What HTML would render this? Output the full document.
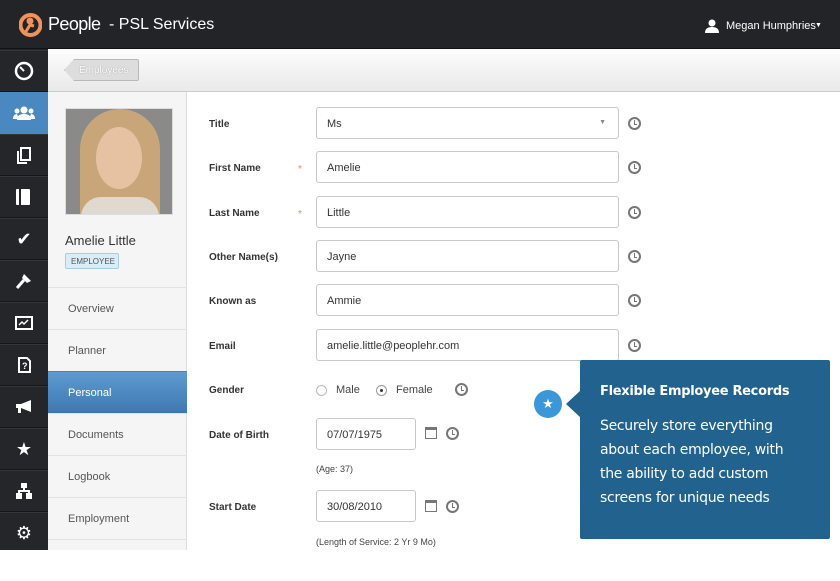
<!DOCTYPE html>
<html><head><style>
*{margin:0;padding:0;box-sizing:border-box}
body{width:840px;height:550px;overflow:hidden;background:#fff;font-family:"Liberation Sans",sans-serif;position:relative}
.top{position:absolute;left:0;top:0;width:840px;height:49px;background:#232427;border-bottom:1px solid #111}
.side{position:absolute;left:0;top:49px;width:48px;height:501px;background:#24262a;overflow:hidden}
.si{position:absolute;left:0;width:48px;height:42px;border-bottom:1px solid #151618;border-top:1px solid #33363a;display:flex;align-items:center;justify-content:center;color:#fff;font-size:18px}
.sub{position:absolute;left:48px;top:49px;width:792px;height:43px;background:linear-gradient(#fdfdfd,#e9e9e9);border-bottom:1px solid #ccc}
.lp{position:absolute;left:48px;top:92px;width:139px;height:458px;background:#f5f5f5;border-right:1px solid #ddd}
.nav{position:absolute;left:0;width:139px;height:42px;border-top:1px solid #e2e2e2;font-size:11px;color:#555;padding:15px 0 0 20px}
.lab{position:absolute;left:209px;font-size:10px;font-weight:bold;color:#333}
.inp{position:absolute;left:316px;width:303px;height:32px;border:1px solid #c8c8c8;border-radius:3px;font-size:11px;color:#333;padding:10px 0 0 10px;background:#fff}
.clk{position:absolute;width:13px;height:13px;border:2px solid #777;border-radius:50%}
.clk:after{content:"";position:absolute;left:3.5px;top:1px;width:2px;height:4px;border-left:1.5px solid #777;border-bottom:1.5px solid #777}
.ast{position:absolute;left:298px;color:#e8825a;font-size:10px}
.cal{position:absolute;width:12px;height:12px;border:1px solid #777;border-top:3px solid #777}
</style></head><body>
<div class="top">
<svg style="position:absolute;left:19px;top:13px" width="23" height="24" viewBox="0 0 23 24"><circle cx="11.5" cy="12" r="10" fill="none" stroke="#f0935a" stroke-width="4"/><circle cx="11" cy="8" r="3.5" fill="#f0935a"/><path d="M6 20 L11 12 L15 13" stroke="#f0935a" stroke-width="3" fill="none"/></svg>
<div style="position:absolute;left:48px;top:14px;color:#fff;font-size:18px;letter-spacing:-0.6px">People</div>
<div style="position:absolute;left:109px;top:16px;color:#fff;font-size:16px">- PSL Services</div>
<svg style="position:absolute;left:705px;top:19px" width="14" height="14" viewBox="0 0 14 14"><circle cx="7" cy="4" r="3.5" fill="#fff"/><path d="M0 14 Q0 8 7 8 Q14 8 14 14Z" fill="#fff"/></svg>
<div style="position:absolute;left:726px;top:20px;color:#fff;font-size:11px">Megan Humphries</div>
<div style="position:absolute;left:815px;top:22px;color:#fff;font-size:7px">▼</div>
</div>
<div class="side">
<div class="si" style="top:1px"><svg width="20" height="20"><circle cx="10" cy="10" r="8" fill="none" stroke="#fff" stroke-width="2.5"/><path d="M10 10 L6 6" stroke="#fff" stroke-width="2"/></svg></div>
<div class="si" style="top:43px;background:#4a88c2;border-color:#4a88c2"><svg width="22" height="14"><circle cx="11" cy="4" r="3.5" fill="#fff"/><path d="M4 14 Q4 8 11 8 Q18 8 18 14Z" fill="#fff"/><circle cx="4" cy="5" r="2.5" fill="#fff"/><circle cx="18" cy="5" r="2.5" fill="#fff"/><path d="M0 13 Q0 8 4 8 L6 13Z M22 13 Q22 8 18 8 L16 13Z" fill="#fff"/></svg></div>
<div class="si" style="top:85px"><svg width="14" height="17"><rect x="4" y="1" width="9" height="12" fill="none" stroke="#fff" stroke-width="2"/><path d="M1 4 V16 H10" fill="none" stroke="#fff" stroke-width="2"/></svg></div>
<div class="si" style="top:127px"><svg width="16" height="16"><rect x="0" y="0" width="14" height="16" rx="1" fill="#fff"/><rect x="3" y="0" width="2" height="16" fill="#24262a"/></svg></div>
<div class="si" style="top:169px">✔</div>
<div class="si" style="top:211px"><svg width="16" height="16"><path d="M8 1 L15 8 L11 10 L6 5Z" fill="#fff"/><path d="M8 7 L1 15" stroke="#fff" stroke-width="3"/></svg></div>
<div class="si" style="top:253px"><svg width="18" height="14"><rect x="1" y="1" width="16" height="12" fill="none" stroke="#fff" stroke-width="2"/><path d="M4 9 L7 6 L9 8 L13 4" stroke="#fff" stroke-width="1.5" fill="none"/></svg></div>
<div class="si" style="top:295px"><svg width="13" height="16"><path d="M1 1 H9 L12 4 V15 H1Z" fill="none" stroke="#fff" stroke-width="2"/><text x="4" y="12" font-size="9" fill="#fff" font-weight="bold" font-family="Liberation Sans">?</text></svg></div>
<div class="si" style="top:337px"><svg width="18" height="14"><path d="M1 4 H6 L16 0 V12 L6 8 H1Z" fill="#fff"/><rect x="3" y="8" width="3" height="5" fill="#fff"/></svg></div>
<div class="si" style="top:379px">★</div>
<div class="si" style="top:421px"><svg width="16" height="16"><rect x="5" y="0" width="6" height="5" fill="#fff"/><rect x="0" y="10" width="6" height="6" fill="#fff"/><rect x="10" y="10" width="6" height="6" fill="#fff"/><path d="M8 5 V8 M3 10 V8 H13 V10" stroke="#fff" stroke-width="2" fill="none"/></svg></div>
<div class="si" style="top:463px;height:50px;align-items:flex-start;padding-top:10px">⚙</div>
</div>
<div class="sub">
<div style="position:absolute;left:16px;top:10px;width:75px;height:22px;background:#ddd;border:1px solid #b8b8b8;border-radius:2px;clip-path:polygon(10px 0,100% 0,100% 100%,10px 100%,0 50%);"></div>
<div style="position:absolute;left:31px;top:16px;font-size:10px;color:#fff;text-shadow:0 0 1px #888">Employees</div>
</div>
<div class="lp">
<div style="position:absolute;left:17px;top:16px;width:108px;height:107px;background:#8a8a88;border:1px solid #ddd;overflow:hidden">
<div style="position:absolute;left:14px;top:0;width:80px;height:110px;background:#c9a67a;border-radius:40px 40px 0 0"></div>
<div style="position:absolute;left:30px;top:18px;width:46px;height:62px;background:#e6c2a2;border-radius:50%"></div>
<div style="position:absolute;left:15px;top:88px;width:78px;height:22px;background:#e0d9cf;border-radius:20px 20px 0 0"></div>
</div>
<div style="position:absolute;left:17px;top:141px;font-size:13px;color:#333">Amelie Little</div>
<div style="position:absolute;left:17px;top:161px;width:54px;height:16px;background:#d9edf7;border:1px solid #a8cce0;border-radius:2px;font-size:8px;color:#555;padding:3px 0 0 5px">EMPLOYEE</div>
<div class="nav" style="top:195px">Overview</div>
<div class="nav" style="top:237px">Planner</div>
<div class="nav" style="top:279px;background:linear-gradient(#5c9bd0,#3f78b0);color:#fff;border-color:#4a80b5">Personal</div>
<div class="nav" style="top:321px">Documents</div>
<div class="nav" style="top:363px">Logbook</div>
<div class="nav" style="top:405px">Employment</div>
<div class="nav" style="top:447px"></div>
</div>
<div class="lab" style="top:119px">Title</div>
<div class="inp" style="top:107px">Ms<span style="position:absolute;right:12px;top:11px;font-size:7px;color:#888">▼</span></div>
<div class="clk" style="left:628px;top:117px"></div>
<div class="lab" style="top:163px">First Name</div><div class="ast" style="top:164px">*</div>
<div class="inp" style="top:151px">Amelie</div><div class="clk" style="left:628px;top:161px"></div>
<div class="lab" style="top:208px">Last Name</div><div class="ast" style="top:209px">*</div>
<div class="inp" style="top:196px">Little</div><div class="clk" style="left:628px;top:206px"></div>
<div class="lab" style="top:252px">Other Name(s)</div>
<div class="inp" style="top:240px">Jayne</div><div class="clk" style="left:628px;top:250px"></div>
<div class="lab" style="top:296px">Known as</div>
<div class="inp" style="top:284px">Ammie</div><div class="clk" style="left:628px;top:294px"></div>
<div class="lab" style="top:341px">Email</div>
<div class="inp" style="top:329px">amelie.little@peoplehr.com</div><div class="clk" style="left:628px;top:339px"></div>
<div class="lab" style="top:385px">Gender</div>
<div style="position:absolute;left:316px;top:385px;width:11px;height:11px;border:1px solid #bbb;border-radius:50%"></div>
<div style="position:absolute;left:336px;top:384px;font-size:11px;color:#444">Male</div>
<div style="position:absolute;left:376px;top:385px;width:11px;height:11px;border:1px solid #999;border-radius:50%"><div style="margin:3px;width:3px;height:3px;background:#333;border-radius:50%"></div></div>
<div style="position:absolute;left:396px;top:384px;font-size:11px;color:#444">Female</div>
<div class="clk" style="left:455px;top:383px"></div>
<div class="lab" style="top:430px">Date of Birth</div>
<div class="inp" style="top:418px;width:100px">07/07/1975</div>
<div class="cal" style="left:425px;top:427px"></div><div class="clk" style="left:446px;top:427px"></div>
<div style="position:absolute;left:316px;top:464px;font-size:9px;color:#444">(Age: 37)</div>
<div class="lab" style="top:502px">Start Date</div>
<div class="inp" style="top:490px;width:100px">30/08/2010</div>
<div class="cal" style="left:425px;top:500px"></div><div class="clk" style="left:446px;top:500px"></div>
<div style="position:absolute;left:316px;top:537px;font-size:9px;color:#444">(Length of Service: 2 Yr 9 Mo)</div>
<div style="position:absolute;left:534px;top:390px;width:28px;height:28px;border-radius:50%;background:#3a98d8;color:#fff;font-size:13px;text-align:center;line-height:28px">★</div>
<div style="position:absolute;left:566px;top:390px;width:15px;height:28px;background:#21628f;clip-path:polygon(100% 0,0 50%,100% 100%)"></div>
<div style="position:absolute;left:580px;top:360px;width:250px;height:179px;background:#21628f;border-radius:2px;color:#fff;font-family:'DejaVu Sans',sans-serif">
<div style="position:absolute;left:20px;top:24px;font-size:13px;font-weight:bold;letter-spacing:-0.3px;white-space:nowrap">Flexible Employee Records</div>
<div style="position:absolute;left:20px;top:54px;font-size:14px;line-height:24px;letter-spacing:-0.3px;white-space:nowrap">Securely store everything<br>about each employee, with<br>the ability to add custom<br>screens for unique needs</div>
</div>
</body></html>
